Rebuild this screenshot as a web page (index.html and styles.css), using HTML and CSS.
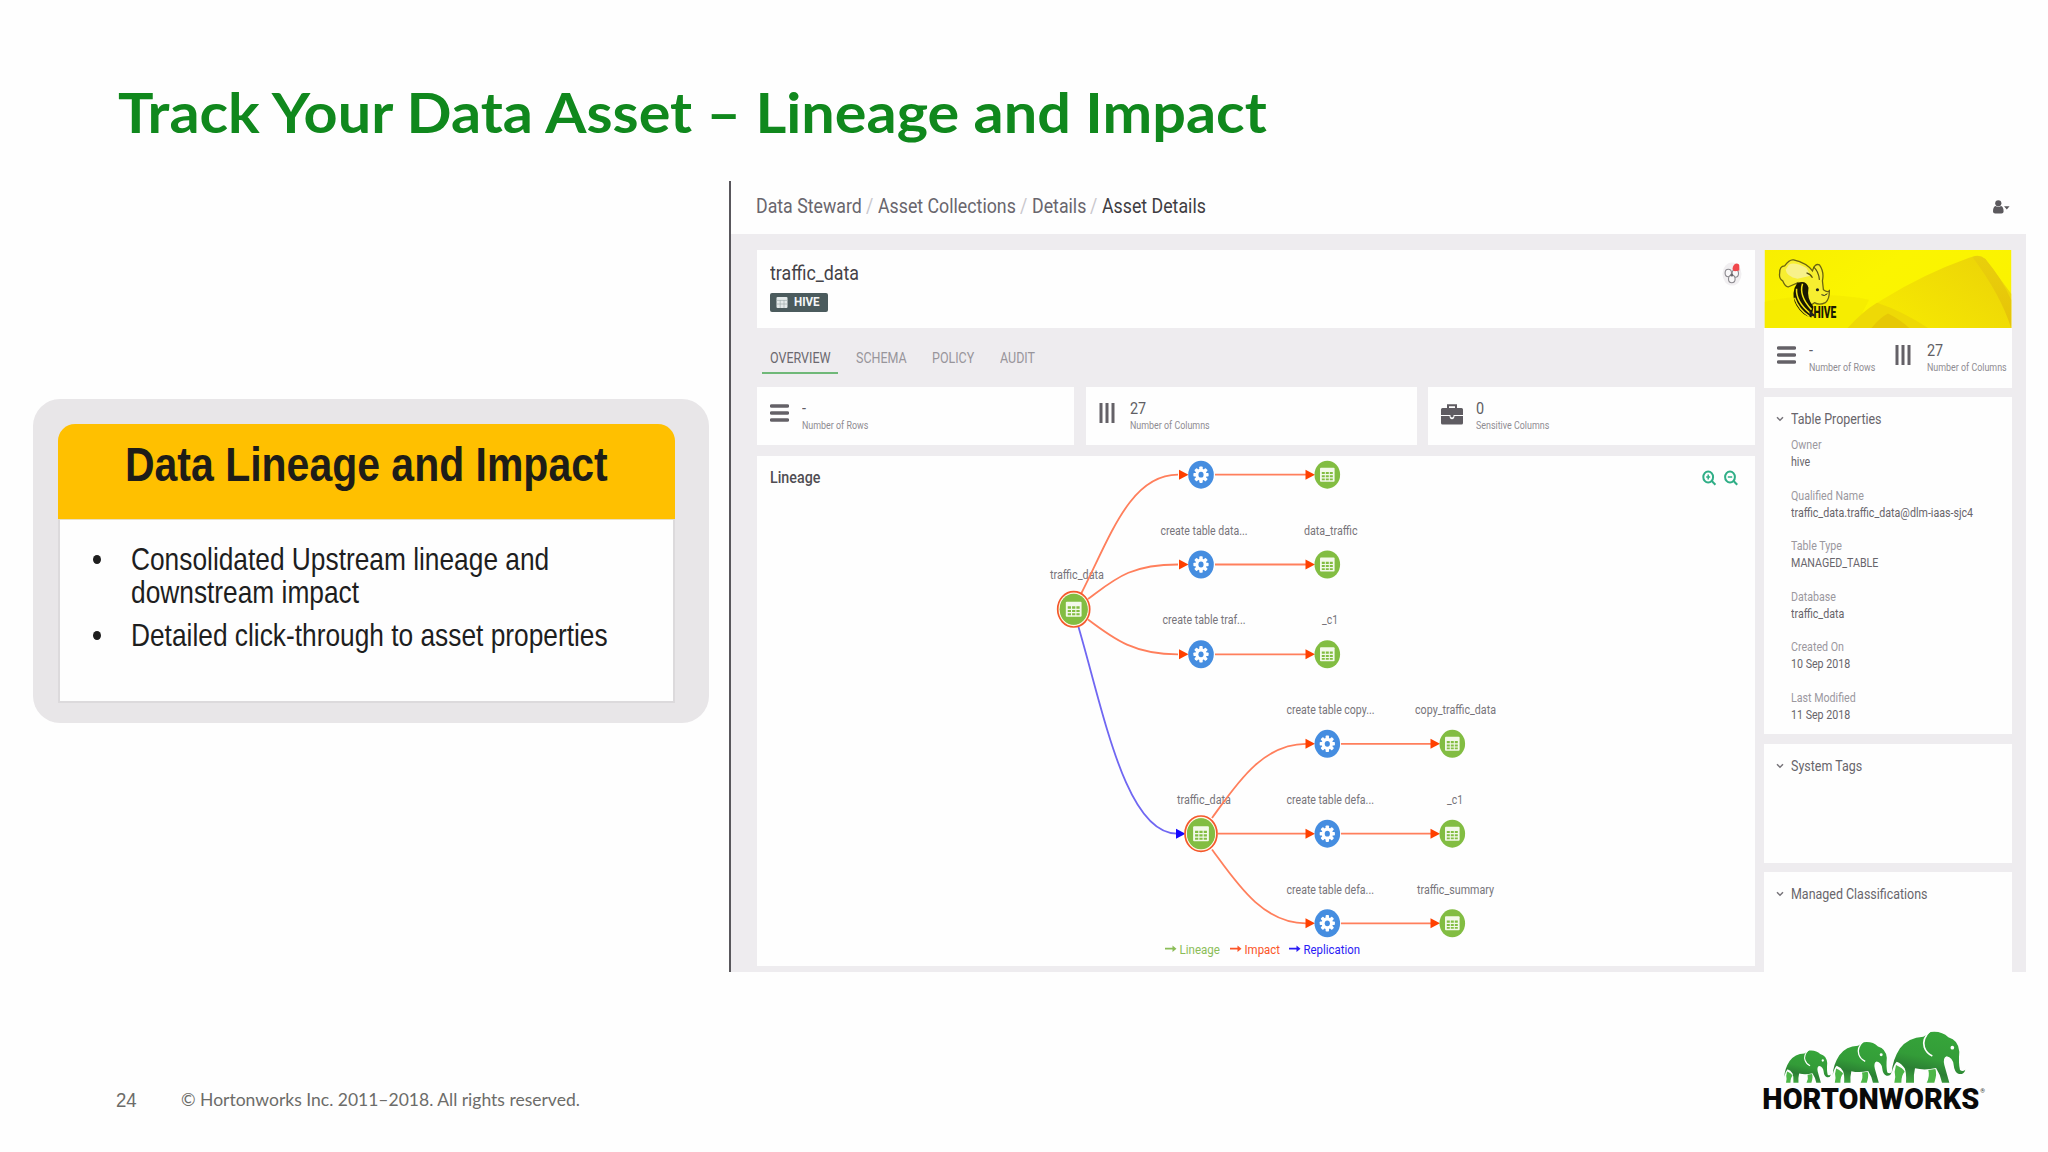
FILE: index.html
```html
<!DOCTYPE html>
<html lang="en">
<head>
<meta charset="utf-8">
<title>Track Your Data Asset</title>
<link rel="stylesheet" href="styles.css">
</head>
<body>
<svg class="defs" width="0" height="0" aria-hidden="true">
  <defs>
    <symbol id="rows" viewBox="0 0 19 18"><path d="M1.5 2h16M1.5 9h16M1.5 16h16" stroke="#646167" stroke-width="3.4" stroke-linecap="round"/></symbol>
    <symbol id="cols" viewBox="0 0 16 20"><path d="M2 0v20M8 0v20M14 0v20" stroke="#646167" stroke-width="3"/></symbol>
    <symbol id="chev" viewBox="0 0 8 6"><path d="M1 1.2l3 3 3-3" fill="none" stroke="#77747a" stroke-width="1.5"/></symbol>
  </defs>
</svg>
<div class="slide">
  <h1 class="title"><span class="t">Track Your Data Asset – Lineage and Impact</span></h1>
  <main class="main">
    <section class="callout">
      <h2 class="callout-head"><span class="t">Data Lineage and Impact</span></h2>
      <ul class="callout-body">
        <li><span class="t">Consolidated Upstream lineage and<br>downstream impact</span></li>
        <li><span class="t">Detailed click-through to asset properties</span></li>
      </ul>
    </section>
    <section class="app">
      <header class="topbar">
        <nav class="crumbs">
          <span class="c1"><span class="t">Data Steward</span></span>
          <span class="sep"><span class="t">/</span></span>
          <span class="c2"><span class="t">Asset Collections</span></span>
          <span class="sep"><span class="t">/</span></span>
          <span class="c3"><span class="t">Details</span></span>
          <span class="sep"><span class="t">/</span></span>
          <span class="c4"><span class="t">Asset Details</span></span>
        </nav>
        <svg class="user" width="17" height="14" viewBox="0 0 17 14"><circle cx="5.3" cy="3.3" r="3.1" fill="#5b595d"/><path d="M0 11.5Q0 6.6 2.6 6Q5.3 8 8 6Q10.6 6.6 10.6 11.5Q10.6 13.6 8.4 13.6H2.2Q0 13.6 0 11.5zM11 6.2h5.6L13.8 9.6z" fill="#5b595d"/></svg>
      </header>
      <div class="content">
        <div class="left">
          <div class="card asset">
            <div>
              <h3 class="asset-name"><span class="t">traffic_data</span></h3>
              <span class="badge"><svg width="12" height="11" viewBox="0 0 12 11"><rect x=".5" width="11" height="11" rx="1" fill="#e4eaea"/><path d="M.5 3.4h11M.5 7h11M4.2 3v8M8 3v8" stroke="#a3b0b0" stroke-width=".7"/></svg><span class="t">HIVE</span></span>
            </div>
            <svg class="owner" width="20" height="24" viewBox="0 0 20 24"><ellipse cx="10" cy="12" rx="9.5" ry="11.5" fill="#f1eff1"/><g fill="#f9f8f9" stroke="#8b898e" stroke-width="1.1"><ellipse cx="6.3" cy="11" rx="3.2" ry="3.7"/><ellipse cx="13.3" cy="11.5" rx="3.2" ry="3.7"/><ellipse cx="9.8" cy="17" rx="3.3" ry="3.7"/></g><circle cx="9.800" cy="13" r="1.500" fill="#6a686d"/><path d="M10.500 7Q11 2 14.500 1.500Q17.500 1.500 17.300 4V8.500L13 9.300Q10.500 9 10.500 7z" fill="#f0484c"/></svg>
          </div>
          <nav class="tabs">
            <span class="tab on"><span class="t">OVERVIEW</span></span>
            <span class="tab tab-schema"><span class="t">SCHEMA</span></span>
            <span class="tab tab-policy"><span class="t">POLICY</span></span>
            <span class="tab"><span class="t">AUDIT</span></span>
          </nav>
          <div class="stats">
            <div class="card stat"><svg width="19" height="18"><use href="#rows"/></svg><div><b class="t">-</b><small class="t">Number of Rows</small></div></div>
            <div class="card stat stat-cols"><svg width="16" height="20"><use href="#cols"/></svg><div><b class="t">27</b><small class="t">Number of Columns</small></div></div>
            <div class="card stat"><svg width="22" height="21" viewBox="0 0 22 21"><path d="M7 4.500V1.200h8v3.300" fill="none" stroke="#5f5c62" stroke-width="2"/><path d="M1.500 4h19q1.500 0 1.500 1.500V11H0V5.500Q0 4 1.500 4zM0 12h8.500q.3 3.200 2.500 3.200t2.500-3.200H22v7q0 1.500-1.500 1.500h-19Q0 20.500 0 19z" fill="#5f5c62"/><path d="M9.500 11v1.600q1.500 2 3 0V11z" fill="#5f5c62"/></svg><div><b class="t">0</b><small class="t">Sensitive Columns</small></div></div>
          </div>
          <div class="card lineage">
            <div class="lineage-head">
              <h4><span class="t">Lineage</span></h4>
              <svg width="36" height="16" viewBox="0 0 36 16"><g fill="none" stroke="#2fae86" stroke-width="2"><ellipse cx="6.200" cy="7" rx="4.900" ry="5.600"/><path d="M9.800 11l3.600 3.800M28 12.600"/><ellipse cx="28" cy="7" rx="4.900" ry="5.600"/><path d="M31.600 11l3.600 3.800"/><path d="M6.200 4.500v5M4.200 7h4M25.800 7h4.400" stroke-width="1.500"/></g></svg>
            </div>
            <svg class="graph" width="998" height="510" viewBox="757 456 998 510">
              <defs>
                <g id="tbl"><ellipse rx="12.800" ry="14" fill="#82bd42"/><rect x="-7.300" y="-7" width="14.600" height="14" rx="1" fill="#f3f9ea"/><path d="M-5.500-2.800h3v2.200h-3zM-1.500-2.800h3v2.200h-3zM2.500-2.800h3v2.200h-3zM-5.500.6h3v2h-3zM-1.500.6h3v2h-3zM2.500.6h3v2h-3zM-5.500 3.700h3v1.800h-3zM-1.500 3.700h3v1.800h-3zM2.500 3.700h3v1.800h-3z" fill="#82bd42"/></g>
                <g id="gear"><ellipse rx="12.800" ry="14" fill="#458de0"/><g fill="#fff"><ellipse rx="5.600" ry="6.100"/><rect x="-1.700" y="-8.200" width="3.400" height="16.400" rx=".8"/><rect x="-7.600" y="-1.800" width="15.200" height="3.600" rx=".8"/><rect x="-1.700" y="-7.900" width="3.400" height="15.800" rx=".8" transform="rotate(45)"/><rect x="-1.700" y="-7.900" width="3.400" height="15.800" rx=".8" transform="rotate(-45)"/></g><ellipse rx="2.600" ry="2.900" fill="#458de0"/></g>
                <g id="root"><ellipse rx="16" ry="17.700" fill="#fff5df" stroke="#f4582c" stroke-width="1.700"/><ellipse rx="14" ry="15.500" fill="#82bd42"/><use href="#tbl" transform="scale(1.08)"/></g>
                <path id="head" d="M0-5L9.500 0 0 5z"/>
              </defs>
              <g class="names">
                <text x="1050" y="579" textLength="54" lengthAdjust="spacingAndGlyphs">traffic_data</text>
                <text x="1160.500" y="534.700" textLength="87" lengthAdjust="spacingAndGlyphs">create table data...</text>
                <text x="1304" y="534.700" textLength="53.500" lengthAdjust="spacingAndGlyphs">data_traffic</text>
                <text x="1162.500" y="624.300" textLength="83" lengthAdjust="spacingAndGlyphs">create table traf...</text>
                <text x="1322" y="624.300" textLength="16" lengthAdjust="spacingAndGlyphs">_c1</text>
                <text x="1286.500" y="714" textLength="88" lengthAdjust="spacingAndGlyphs">create table copy...</text>
                <text x="1415" y="714" textLength="81" lengthAdjust="spacingAndGlyphs">copy_traffic_data</text>
                <text x="1177" y="803.700" textLength="54" lengthAdjust="spacingAndGlyphs">traffic_data</text>
                <text x="1286.500" y="803.700" textLength="87.500" lengthAdjust="spacingAndGlyphs">create table defa...</text>
                <text x="1447" y="803.700" textLength="16" lengthAdjust="spacingAndGlyphs">_c1</text>
                <text x="1286.500" y="893.500" textLength="87.500" lengthAdjust="spacingAndGlyphs">create table defa...</text>
                <text x="1417" y="893.500" textLength="77" lengthAdjust="spacingAndGlyphs">traffic_summary</text>
              </g>
              <g fill="none" stroke="#ff7f5c" stroke-width="1.800">
                <path d="M1081 594C1110 537 1130 474.700 1178 474.700M1088 599C1115 579 1130 564.500 1178 564.500M1088 619.500C1115 640 1135 654.300 1178 654.300"/>
                <path d="M1215 474.700h92M1215 564.500h92M1215 654.300h92M1341 743.800h92M1341 833.700h92M1341 923.300h92M1218 833.700h90"/>
                <path d="M1212 818C1236 785 1262 743.800 1306 743.800M1212 849.500C1236 882 1262 923.300 1306 923.300"/>
                <path d="M1078.500 627C1104 714 1126 833.700 1177 833.700" stroke="#7067f2"/>
              </g>
              <g fill="#ff4000">
                <use href="#head" x="1179" y="474.700"/><use href="#head" x="1179" y="564.500"/><use href="#head" x="1179" y="654.300"/>
                <use href="#head" x="1305.500" y="474.700"/><use href="#head" x="1305.500" y="564.500"/><use href="#head" x="1305.500" y="654.300"/>
                <use href="#head" x="1305.500" y="743.800"/><use href="#head" x="1305.500" y="833.700"/><use href="#head" x="1305.500" y="923.300"/>
                <use href="#head" x="1430.500" y="743.800"/><use href="#head" x="1430.500" y="833.700"/><use href="#head" x="1430.500" y="923.300"/>
                <use href="#head" x="1176" y="833.700" fill="#1408ff"/>
              </g>
              <use href="#root" x="1073.700" y="609.300"/><use href="#root" x="1201" y="833.700"/>
              <use href="#gear" x="1201" y="474.700"/><use href="#gear" x="1201" y="564.500"/><use href="#gear" x="1201" y="654.300"/>
              <use href="#gear" x="1327.300" y="743.800"/><use href="#gear" x="1327.300" y="833.700"/><use href="#gear" x="1327.300" y="923.300"/>
              <use href="#tbl" x="1327.300" y="474.700"/><use href="#tbl" x="1327.300" y="564.500"/><use href="#tbl" x="1327.300" y="654.300"/>
              <use href="#tbl" x="1452.300" y="743.800"/><use href="#tbl" x="1452.300" y="833.700"/><use href="#tbl" x="1452.300" y="923.300"/>
              <g class="legend">
                <g fill="#8bbd58"><path d="M1165 947.800h7.500v-2.300l4 3.200-4 3.200v-2.300h-7.500z"/><text x="1179.500" y="953.500" textLength="40.500" lengthAdjust="spacingAndGlyphs">Lineage</text></g>
                <g fill="#fb5528"><path d="M1230 947.800h7.500v-2.300l4 3.200-4 3.200v-2.300h-7.500z"/><text x="1244.500" y="953.500" textLength="35.500" lengthAdjust="spacingAndGlyphs">Impact</text></g>
                <g fill="#2a1cf5"><path d="M1289 947.800h7.500v-2.300l4 3.200-4 3.200v-2.300h-7.500z"/><text x="1303.500" y="953.500" textLength="56.500" lengthAdjust="spacingAndGlyphs">Replication</text></g>
              </g>
            </svg>
          </div>
        </div>
        <aside class="side">
          <svg class="banner" width="248" height="79" viewBox="0 0 248 79">
            <defs>
              <linearGradient id="y1" x1="0" y1="0" x2="1" y2=".4"><stop offset="0" stop-color="#f8ee00"/><stop offset=".5" stop-color="#fbf500"/><stop offset="1" stop-color="#fbf300"/></linearGradient>
              <linearGradient id="y2" x1="0" y1=".8" x2="1" y2=".2"><stop offset="0" stop-color="#f8ec00"/><stop offset="1" stop-color="#ecd408"/></linearGradient>
              <linearGradient id="y3" x1="0" y1="0" x2="0" y2="1"><stop offset="0" stop-color="#e9cf0c"/><stop offset="1" stop-color="#e6c308"/></linearGradient>
            </defs>
            <rect width="248" height="79" fill="url(#y1)"/>
            <path d="M0 52Q60 40 105 50L90 79H0z" fill="#f4e800" opacity=".6"/>
            <path d="M83 79Q98 62 118 50Q160 24 205 8Q214 4 222 9L248 44V79z" fill="url(#y2)"/>
            <path d="M209 7Q216 4 222 9Q238 28 248 50V79Q238 46 209 7z" fill="url(#y3)"/>
            <path d="M83 79Q98 62 113 53Q140 62 165 79z" fill="#eed906"/><path d="M107 79Q116 68 124 64Q136 70 146 79z" fill="#e6c806"/>
            <path d="M15 23Q15 16 20 16Q25 9 29 10Q42 13 48 21Q50 13 55 15Q60 22 58 31L59 40Q63 43 65 41Q65 50 61 53Q55 56 50 53L40 60 30 46 33 33 24 37Q21 38 18 31Q14 29 15 23z" fill="#f7ee30" stroke="#6b6410" stroke-width="1.300"/>
            <path d="M24 15Q29 11 42 18L46 26 33 29Q22 27 21 20z" fill="#f8f18a"/>
            <path d="M42 23q4 1 6 5M49 17q5 4 6 13" fill="none" stroke="#5b5510" stroke-width="1.200"/>
            <path d="M33 33Q42 30 44 38Q42 49 49 57L47 68Q38 66 32 56Q27 48 30 38z" fill="#181700"/>
            <path d="M38 34Q34 46 47 60M32 39Q31 52 46 64M30 48Q34 60 45 67" fill="none" stroke="#f2e413" stroke-width="1.500"/>
            <circle cx="53" cy="40" r="1.600" fill="#222"/><path d="M57 45q3 2 6-1" stroke="#222" fill="none"/>
            <path d="M45 61l5 4v2l-5-1z" fill="#222"/>
            <text class="hive" x="49" y="68.800" textLength="23" lengthAdjust="spacingAndGlyphs">HIVE</text>
          </svg>
          <div class="sidestats">
            <div class="stat"><svg width="19" height="18"><use href="#rows"/></svg><div><b class="t">-</b><small class="t">Number of Rows</small></div></div>
            <div class="stat stat-cols"><svg width="16" height="20"><use href="#cols"/></svg><div><b class="t">27</b><small class="t">Number of Columns</small></div></div>
          </div>
          <section class="card panel props">
            <h4><svg width="8" height="6"><use href="#chev"/></svg><span class="t">Table Properties</span></h4>
            <dl>
              <dt><span class="t">Owner</span></dt><dd><span class="t">hive</span></dd>
              <dt><span class="t">Qualified Name</span></dt><dd><span class="t">traffic_data.traffic_data@dlm-iaas-sjc4</span></dd>
              <dt><span class="t">Table Type</span></dt><dd><span class="t">MANAGED_TABLE</span></dd>
              <dt><span class="t">Database</span></dt><dd><span class="t">traffic_data</span></dd>
              <dt><span class="t">Created On</span></dt><dd><span class="t">10 Sep 2018</span></dd>
              <dt><span class="t">Last Modified</span></dt><dd><span class="t">11 Sep 2018</span></dd>
            </dl>
          </section>
          <section class="card panel tags"><h4><svg width="8" height="6"><use href="#chev"/></svg><span class="t">System Tags</span></h4></section>
          <section class="card panel classes"><h4><svg width="8" height="6"><use href="#chev"/></svg><span class="t">Managed Classifications</span></h4></section>
        </aside>
      </div>
    </section>
  </main>
  <footer class="foot">
    <span class="page"><span class="t">24</span></span>
    <span class="copy"><span class="t">© Hortonworks Inc. 2011–2018. All rights reserved.</span></span>
    <svg class="logo" width="270" height="120" viewBox="0 0 810 360">
      <defs>
        <linearGradient id="eg" x1=".6" y1="0" x2=".3" y2="1"><stop offset="0" stop-color="#36a53a"/><stop offset=".5" stop-color="#339c38"/><stop offset=".75" stop-color="#2b7f33"/><stop offset="1" stop-color="#3fa53f"/></linearGradient>
        <g id="ele">
          <path d="M468 165Q490 175 494 185Q484 195 484 218H463Q468 200 464 185zM565 180L586 177Q592 190 583 218H560Q570 200 565 180z" fill="#4db748"/>
          <path d="M455 190Q457 150 480 115Q505 82 550 80L572 66Q605 62 625 82Q655 90 658 125Q655 160 660 180Q668 186 676 179Q672 194 657 192Q643 188 641 165Q638 142 620 139Q608 142 613 165L628 218H606Q602 195 588 174Q555 182 525 175Q520 195 522 218H498Q500 190 494 175Q485 160 470 155Q460 165 455 190z" fill="url(#eg)"/>
          <path d="M570 62Q545 88 553 112Q559 130 577 138" fill="none" stroke="#fff" stroke-width="5"/>
          <circle cx="637" cy="113" r="5.500" fill="#fff"/>
        </g>
      </defs>
      <use href="#ele"/><use href="#ele" transform="translate(-86 43.600) scale(.8)"/><use href="#ele" transform="translate(-155.500 79.800) scale(.634)"/>
      <text class="brand" x="67" y="297" textLength="651" lengthAdjust="spacingAndGlyphs">HORTONWORKS</text>
      <text class="reg" x="721" y="248">®</text>
    </svg>
  </footer>
</div>
</body>
</html>
```
FILE: styles.css
```css
* { box-sizing: border-box; margin: 0; padding: 0; }
body { width: 2048px; height: 1152px; background: #fefefe; overflow: hidden; font-family: Roboto, "Liberation Sans", sans-serif; }
svg { display: block; flex: none; }
.defs { position: absolute; }

.t { display: inline-block; white-space: nowrap; transform-origin: 0 50%; transform: scaleX(var(--fit, 1)); }
.slide { display: grid; grid-template-rows: 181px 791px 180px; width: 2048px; height: 1152px; }

.title { --fit: 1.06; padding: 79px 0 0 118px; font: 700 56px/66px Lato, sans-serif; color: #10881d; }

.main { display: grid; grid-template-columns: 729px 1297px; }
.callout { width: 676px; height: 324px; margin: 218px 0 0 33px; padding: 25px 34px 21px 25px; background: #e8e6e8; border-radius: 27px; }
.callout-head { --fit: .836; height: 95px; padding: 12px 0 0 67px; background: #ffc000; border-radius: 17px 17px 0 0; font: 700 49px/56px "Liberation Sans", sans-serif; color: #1e1d18; }
.callout-body { --fit: .822; height: 184px; padding: 23px 0 0 70.500px; background: #fefefe; border: 2px solid #dcdadc; border-top: 1px solid #e8dfc4; list-style: none; font: 32px/32.500px "Liberation Sans", sans-serif; color: #1e1e1e; }
.callout-body li { height: 65px; margin-bottom: 10.500px; position: relative; }
.callout-body li::before { content: ""; position: absolute; left: -38px; top: 12px; width: 8px; height: 9px; border-radius: 50%; background: #1e1e1e; }

.app { display: flex; flex-direction: column; height: 791px; border-left: 2px solid #59575c; overflow: hidden; }
.topbar { height: 53px; padding: 13.500px 16px 0 25px; display: flex; justify-content: space-between; }
.topbar .user { margin-top: 5px; }
.crumbs { --fit: .902; display: flex; font-size: 19.700px; line-height: 24px; color: #69666d; }
.crumbs .c1 { width: 110px; } .crumbs .c2 { width: 142px; } .crumbs .c3 { width: 58px; }
.crumbs .sep { width: 12px; color: #c9c7cc; }
.crumbs .c4 { color: #3f3d42; }
.content { flex: 1; display: grid; grid-template-columns: 998px 248px; column-gap: 9px; padding: 15.500px 14px 0 26px; background: #eeecef; min-height: 0; }
.card { background: #fefefe; }
.asset { display: flex; justify-content: space-between; height: 78.500px; padding: 12.500px 13px 0; }
.asset-name { --fit: .905; font-size: 19.700px; line-height: 24px; font-weight: 400; color: #444247; }
.badge { --fit: .89; display: flex; align-items: center; width: 58px; height: 19.500px; margin-top: 6.500px; padding-left: 6px; background: #4b5b5d; border-radius: 2px; font-size: 13px; font-weight: 700; line-height: 16px; color: #f4f6f6; }
.badge svg { margin-right: 5.500px; }
.tabs { --fit: .862; display: flex; height: 59px; padding: 20.500px 0 0 5px; font-size: 14.500px; line-height: 19px; color: #98959b; }
.tab { height: 25px; }
.tab.on { width: 76px; padding-left: 8px; margin-right: 18px; border-bottom: 2.500px solid #6fb878; color: #6b686e; }
.tab-schema { width: 76px; } .tab-policy { width: 68px; }
.stats { display: grid; grid-template-columns: 317px 331px 327px; column-gap: 11.500px; height: 57.500px; margin-bottom: 11.500px; }
.stat { display: flex; padding: 12.500px 0 0 13px; }
.stat svg { margin: 4px 13px 0 0; }
.stat-cols svg { margin: 3px 15.500px 0 0; }
.stat div { display: flex; flex-direction: column; }
.stat b { --fit: .9; font-size: 16px; line-height: 18px; font-weight: 400; color: #615e64; }
.stat small { --fit: .825; margin-top: 2px; font-size: 10.800px; line-height: 12px; color: #8f8c92; }
.lineage { display: grid; height: 510px; }
.lineage > * { grid-area: 1 / 1; }
.lineage-head { --fit: .893; display: flex; justify-content: space-between; align-items: flex-start; padding: 12px 17px 0 13px; }
.lineage-head h4 { font-size: 16px; line-height: 20px; font-weight: 500; color: #504d53; }
.lineage-head svg { margin-top: 2px; }
.names { font-size: 12.500px; fill: #77747a; }
.legend { font-size: 13.500px; }
.side .banner { height: 78.500px; }
.sidestats { display: flex; height: 59.500px; background: #fefefe; margin-bottom: 9.500px; }
.sidestats .stat { padding-top: 14px; }
.sidestats .stat:first-child { width: 118px; }
.hive { font: 900 17px Roboto, sans-serif; fill: #1c1a00; }
.panel h4 { --fit: .83; display: flex; align-items: center; padding: 12px 0 0 12px; font-size: 15px; line-height: 20px; font-weight: 400; color: #68656b; }
.panel h4 svg { margin-right: 6.500px; }
.props { height: 337px; margin-bottom: 10px; }
.tags { height: 119px; margin-bottom: 9px; }
.classes { height: 110px; }
.panel dl { --fit: .833; padding: 7px 0 0 26.500px; font-size: 12.800px; }
.panel dt { line-height: 18px; color: #9b989e; }
.panel dd { line-height: 16px; height: 32.600px; color: #68656b; }

.foot { display: flex; color: #6c6c69; }
.page { --fit: .93; width: 65px; margin-left: 116px; padding-top: 115.500px; font: 20px/24px "Liberation Sans", sans-serif; }
.copy { --fit: 1.03; width: 1559px; padding-top: 116px; font: 17px/24px Lato, sans-serif; }
.logo { margin-top: 38px; }
.brand { font: 900 90px Roboto, sans-serif; fill: #0a0a0a; }
.reg { font: 18px Roboto, sans-serif; fill: #333; }
```
